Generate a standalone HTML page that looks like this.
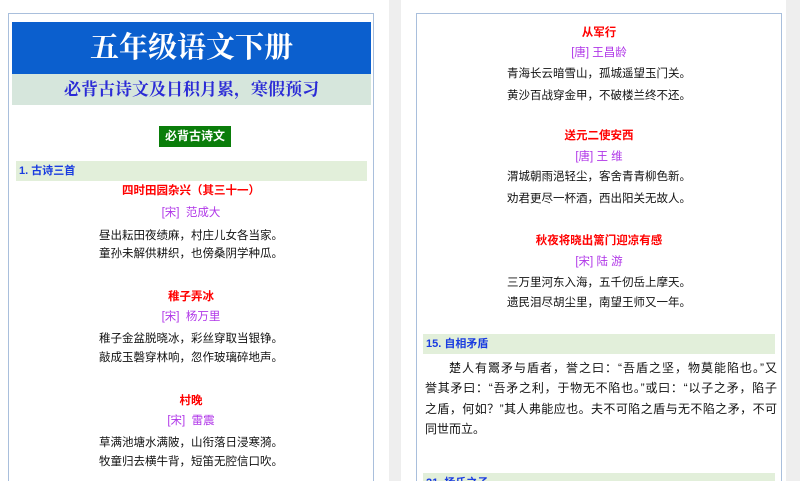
<!DOCTYPE html>
<html><head><meta charset="utf-8"><style>
*{margin:0;padding:0;box-sizing:border-box}
html,body{width:800px;height:481px;overflow:hidden}
body{background:#fff;font-family:"Liberation Sans","Noto Sans CJK SC",sans-serif;position:relative}
.strip{position:absolute;top:0;height:481px;background:#eeeeee}
.page{position:absolute;background:#fff;border:1px solid #a9bfdc;top:13px;height:475px;overflow:hidden}
.a{position:absolute;left:0;right:0;text-align:center;font-size:11.5px;line-height:14px}
.t{color:#f00;font-weight:bold}
.au{color:#b036e8}
.l{color:#111}
.bar{position:absolute;background:#e2efda;color:#1a3ce0;font-size:11px;line-height:20px;padding-left:3px;font-weight:bold}
.p{position:absolute;left:8px;width:352px;font-size:12px;line-height:14px;color:#111;white-space:nowrap;text-align:justify;text-align-last:justify}
</style></head><body>
<div class="strip" style="left:389px;width:12px"></div>
<div class="strip" style="left:786px;width:14px"></div>
<div class="page" style="left:8px;width:366px">
  <div style="position:absolute;left:3px;top:8px;width:359px;height:52px;background:#0b5fce;color:#fff;font:bold 29px 'Liberation Serif','Noto Serif CJK SC',serif;text-align:center;line-height:52px">五年级语文下册</div>
  <div style="position:absolute;left:3px;top:60px;width:359px;height:31px;background:#d6e6dc;color:#2b2bd6;font:bold 17px 'Liberation Serif','Noto Serif CJK SC',serif;text-align:center;line-height:31px">必背古诗文及日积月累，寒假预习</div>
  <div style="position:absolute;left:150px;top:112px;width:72px;height:21px;background:#0a7d0a;color:#fff;font-weight:bold;font-size:12px;text-align:center;line-height:21px">必背古诗文</div>
  <div class="bar" style="left:7px;top:147px;width:351px">1. 古诗三首</div>
  <div class="a t" style="top:170px">四时田园杂兴（其三十一）</div>
  <div class="a au" style="top:192px">[宋]&nbsp; 范成大</div>
  <div class="a l" style="top:215px">昼出耘田夜绩麻，村庄儿女各当家。</div>
  <div class="a l" style="top:233px">童孙未解供耕织，也傍桑阴学种瓜。</div>
  <div class="a t" style="top:276px">稚子弄冰</div>
  <div class="a au" style="top:296px">[宋]&nbsp; 杨万里</div>
  <div class="a l" style="top:318px">稚子金盆脱晓冰，彩丝穿取当银铮。</div>
  <div class="a l" style="top:337px">敲成玉磬穿林响，忽作玻璃碎地声。</div>
  <div class="a t" style="top:380px">村晚</div>
  <div class="a au" style="top:400px">[宋]&nbsp; 雷震</div>
  <div class="a l" style="top:422px">草满池塘水满陂，山衔落日浸寒漪。</div>
  <div class="a l" style="top:441px">牧童归去横牛背，短笛无腔信口吹。</div>
</div>
<div class="page" style="left:416px;width:366px">
  <div class="a t" style="top:12px">从军行</div>
  <div class="a au" style="top:32px">[唐] 王昌龄</div>
  <div class="a l" style="top:53px">青海长云暗雪山，孤城遥望玉门关。</div>
  <div class="a l" style="top:75px">黄沙百战穿金甲，不破楼兰终不还。</div>
  <div class="a t" style="top:115px">送元二使安西</div>
  <div class="a au" style="top:136px">[唐] 王 维</div>
  <div class="a l" style="top:156px">渭城朝雨浥轻尘，客舍青青柳色新。</div>
  <div class="a l" style="top:178px">劝君更尽一杯酒，西出阳关无故人。</div>
  <div class="a t" style="top:220px">秋夜将晓出篱门迎凉有感</div>
  <div class="a au" style="top:241px">[宋] 陆 游</div>
  <div class="a l" style="top:262px">三万里河东入海，五千仞岳上摩天。</div>
  <div class="a l" style="top:282px">遗民泪尽胡尘里，南望王师又一年。</div>
  <div class="bar" style="left:6px;top:320px;width:352px">15. 自相矛盾</div>
  <div class="p" style="top:347px;padding-left:24px">楚人有鬻矛与盾者，誉之曰：“吾盾之坚，物莫能陷也。”又</div>
  <div class="p" style="top:367px">誉其矛曰：“吾矛之利，于物无不陷也。”或曰：“以子之矛，陷子</div>
  <div class="p" style="top:388px">之盾，何如？”其人弗能应也。夫不可陷之盾与无不陷之矛，不可</div>
  <div class="p" style="top:408px;text-align-last:left">同世而立。</div>
  <div class="bar" style="left:6px;top:459px;width:352px">21. 杨氏之子</div>
</div>
</body></html>
